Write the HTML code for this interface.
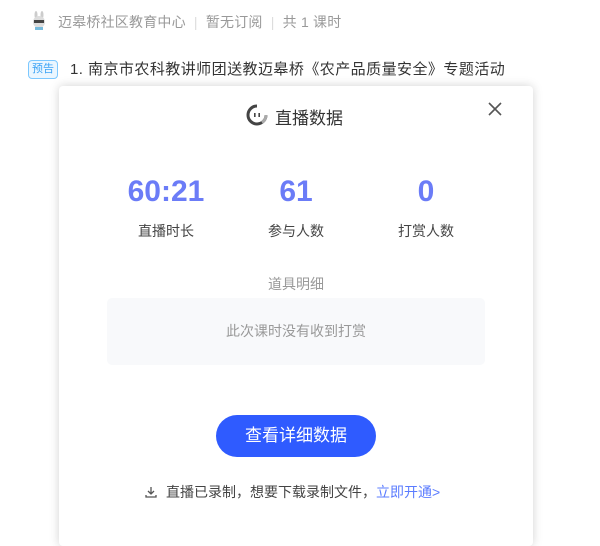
<!DOCTYPE html>
<html><head><meta charset="utf-8"><style>
body{margin:0;width:600px;height:525px;background:#fff;overflow:hidden;position:relative;font-family:"Liberation Sans","Noto Sans CJK SC",sans-serif}
.a{position:absolute;white-space:nowrap}
</style></head><body>
<div class="a" style="left:30px;top:11px;width:18px;height:20px">
<svg width="18" height="20" viewBox="0 0 18 20"><ellipse cx="6" cy="4" rx="1.5" ry="4" fill="#ccc"/><ellipse cx="12" cy="4" rx="1.5" ry="4" fill="#ccc"/><circle cx="9" cy="11" r="6" fill="#ddd"/><rect x="4" y="9" width="10" height="3" fill="#444"/><rect x="5" y="16" width="8" height="3" fill="#7bd"/></svg></div>
<div class="a" style="left:58px;top:12px;font-size:14px;color:#999;letter-spacing:0.2px">迈皋桥社区教育中心 <span style="color:#ddd;margin:0 4px">|</span> 暂无订阅 <span style="color:#ddd;margin:0 4px">|</span> 共 1 课时</div>
<div class="a" style="left:28px;top:60px;width:28px;height:17px;border:1px solid #7cc8ff;border-radius:4px;background:#eaf6ff;color:#3aa3f5;font-size:11px;line-height:17px;text-align:center">预告</div>
<div class="a" style="left:70px;top:58px;font-size:15px;color:#333;letter-spacing:0.45px">1. 南京市农科教讲师团送教迈皋桥《农产品质量安全》专题活动</div>
<div class="a" style="left:59px;top:86px;width:474px;height:460px;background:#fff;border-radius:4px;box-shadow:0 0 10px rgba(0,0,0,0.18)"></div>
<div class="a" style="left:246px;top:104px;width:22px;height:22px"><svg width="22" height="22" viewBox="0 0 22 22"><path d="M11 2a9 9 0 1 0 9 9" fill="none" stroke="#444" stroke-width="3"/><path d="M20 11a9 9 0 0 1-4 7.5" fill="none" stroke="#aaa" stroke-width="3"/><rect x="8" y="9" width="1.6" height="4" fill="#444"/><rect x="12.4" y="9" width="1.6" height="4" fill="#444"/></svg></div>
<div class="a" style="left:275px;top:104px;font-size:17px;color:#333">直播数据</div>
<div class="a" style="left:487px;top:101px"><svg width="16" height="16"><path d="M2 2L14 14M14 2L2 14" stroke="#555" stroke-width="1.6"/></svg></div>
<div class="a" style="left:106px;top:175px;width:120px;text-align:center;font-size:30px;font-weight:bold;color:#6b7cf7">60:21</div>
<div class="a" style="left:236px;top:175px;width:120px;text-align:center;font-size:30px;font-weight:bold;color:#6b7cf7">61</div>
<div class="a" style="left:366px;top:175px;width:120px;text-align:center;font-size:30px;font-weight:bold;color:#6b7cf7">0</div>
<div class="a" style="left:106px;top:221px;width:120px;text-align:center;font-size:14px;color:#444">直播时长</div>
<div class="a" style="left:236px;top:221px;width:120px;text-align:center;font-size:14px;color:#444">参与人数</div>
<div class="a" style="left:366px;top:221px;width:120px;text-align:center;font-size:14px;color:#444">打赏人数</div>
<div class="a" style="left:236px;top:274px;width:120px;text-align:center;font-size:14px;color:#999">道具明细</div>
<div class="a" style="left:107px;top:298px;width:378px;height:67px;background:#f8f9fb;border-radius:5px;text-align:center;line-height:67px;font-size:14px;color:#999">此次课时没有收到打赏</div>
<div class="a" style="left:216px;top:415px;width:160px;height:42px;border-radius:21px;background:#2f5bff;color:#fff;font-size:17px;text-align:center;line-height:42px">查看详细数据</div>
<div class="a" style="left:145px;top:485px"><svg width="12" height="12"><path d="M6 1v7M3 5l3 3 3-3M1 9v2h10V9" fill="none" stroke="#555" stroke-width="1.3"/></svg></div>
<div class="a" style="left:166px;top:482px;font-size:14px;color:#444">直播已录制，想要下载录制文件，<span style="color:#5b7cff">立即开通&gt;</span></div>
</body></html>
